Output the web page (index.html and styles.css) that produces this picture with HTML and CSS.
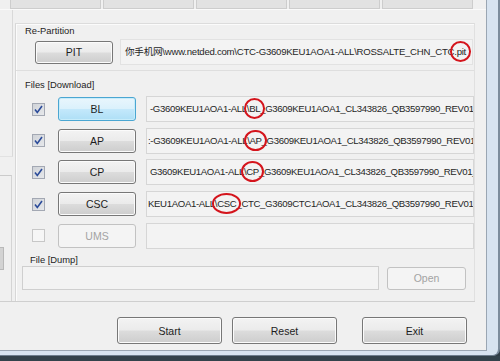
FILE: index.html
```html
<!doctype html>
<html lang="en">
<head>
    <meta charset="UTF-8">
    <title>Odin</title>
    <link rel="stylesheet" href="styles.css">
</head>
<body>
<div class="window">
    <div class="frame">
        <div class="client">
            <div class="tabs">
                <div class="tab"></div>
                <div class="tab"></div>
                <div class="tab"></div>
                <div class="tab"></div>
                <div class="tab"></div>
            </div>
            <div class="body">
                <div class="side">
                    <div class="side-top"></div>
                    <div class="side-bottom"><div class="stub"></div></div>
                </div>
                <div class="main">
                    <div class="part">
                        <div class="caption">Re-Partition</div>
                        <div class="pit-row">
                            <button class="btn pit">PIT</button>
                            <div class="field">你手机网\www.netded.com\CTC-G3609KEU1AOA1-ALL\ROSSALTE_CHN_CT<span class="mark">C.pit</span></div>
                        </div>
                    </div>
                    <div class="files">
                        <div class="caption">Files [Download]</div>
                        <div class="file-row">
                            <span class="check on"><svg viewBox="0 0 11 11"><path d="M2 5.5 L4.3 8.5 L9 2"/></svg></span>
                            <button class="btn focus">BL</button>
                            <div class="field">-G3609KEU1AOA1-AL<span class="mark">L\BL</span>_G3609KEU1AOA1_CL343826_QB3597990_REV01</div>
                        </div>
                        <div class="file-row">
                            <span class="check on"><svg viewBox="0 0 11 11"><path d="M2 5.5 L4.3 8.5 L9 2"/></svg></span>
                            <button class="btn">AP</button>
                            <div class="field cut">:-G3609KEU1AOA1-AL<span class="mark">L\AP</span>_G3609KEU1AOA1_CL343826_QB3597990_REV01</div>
                        </div>
                        <div class="file-row">
                            <span class="check on"><svg viewBox="0 0 11 11"><path d="M2 5.5 L4.3 8.5 L9 2"/></svg></span>
                            <button class="btn">CP</button>
                            <div class="field">G3609KEU1AOA1-AL<span class="mark">L\CP</span>_G3609KEU1AOA1_CL343826_QB3597990_REV01_</div>
                        </div>
                        <div class="file-row">
                            <span class="check on"><svg viewBox="0 0 11 11"><path d="M2 5.5 L4.3 8.5 L9 2"/></svg></span>
                            <button class="btn">CSC</button>
                            <div class="field cut">KEU1AOA1-AL<span class="mark">L\CSC</span>_CTC_G3609CTC1AOA1_CL343826_QB3597990_REV01_</div>
                        </div>
                        <div class="file-row">
                            <span class="check"></span>
                            <button class="btn off">UMS</button>
                            <div class="field"></div>
                        </div>
                    </div>
                    <div class="dump">
                        <div class="caption">File [Dump]</div>
                        <div class="dump-row">
                            <div class="field"></div>
                            <button class="btn off open">Open</button>
                        </div>
                    </div>
                </div>
            </div>
            <div class="actions">
                <button class="btn big">Start</button>
                <button class="btn big">Reset</button>
                <button class="btn big exit">Exit</button>
            </div>
        </div>
    </div>
    <div class="shadow"></div>
</div>
</body>
</html>
```

FILE: styles.css
```css
* {
    padding: 0;
    margin: 0;
    box-sizing: border-box;
}
body {
    width: 500px;
    height: 361px;
    overflow: hidden;
    background: #2f3c45;
    font-family: "Liberation Sans", "Noto Sans CJK SC", sans-serif;
    font-size: 9.6px;
    color: #1e1e1e;
}
.window {
    width: 500px;
    height: 361px;
    display: flex;
    flex-direction: column;
}
.frame {
    height: 356px;
    background: #d7e3f0;
    padding: 0 11px 4px 0;
    border-right: 2px solid #7c8c9c;
    border-bottom: 1px solid #6d7d8d;
    border-bottom-right-radius: 7px;
}
.client {
    width: 487px;
    height: 351px;
    background: #f0f0f0;
    border-right: 1px solid #9aa6b3;
    border-bottom: 1px solid #9aa6b3;
    display: flex;
    flex-direction: column;
}
.shadow {
    flex: 1;
    background: #33424b;
}
.tabs {
    height: 10px;
    display: flex;
    gap: 2px;
    padding-left: 10px;
    border-bottom: 1px solid #fafafa;
}
.tab {
    width: 91px;
    height: 9px;
    background: #e2e2e2;
    border: 1px solid #cdcdcd;
    border-top: none;
}
.body {
    height: 292px;
    display: flex;
    border-bottom: 1px solid #cfcfcf;
    margin-right: 11px;
}
.side {
    width: 15px;
    display: flex;
    flex-direction: column;
}
.side-top {
    height: 147px;
    width: 13px;
    border-right: 1px solid #d9d9d9;
    border-bottom: 1px solid #e2e2e2;
}
.side-bottom {
    margin-top: 18px;
    flex: 1;
    width: 12px;
    border-top: 1px solid #cbcbcb;
    border-right: 1px solid #d4d4d4;
    padding-top: 71px;
}
.stub {
    width: 4px;
    height: 23px;
    background: #d3d3d3;
    border: 1px solid #b9b9b9;
    border-left: none;
}
.main {
    flex: 1;
    min-width: 0;
    margin-top: 13px;
    border-left: 1px solid #d7d7d7;
    border-top: 1px solid #dcdcdc;
    border-right: 1px solid #e0e0e0;
    box-shadow: inset 1px 1px 0 #fbfbfb;
    display: flex;
    flex-direction: column;
}
.caption {
    line-height: 12px;
    padding-left: 9px;
    font-size: 9.4px;
}
.part {
    padding-top: 1px;
    height: 47px;
    border-bottom: 1px solid #dedede;
}
.pit-row {
    display: flex;
    align-items: center;
    margin-top: 2px;
    height: 26px;
}
.btn {
    font-family: inherit;
    font-size: 10.5px;
    color: #1e1e1e;
    width: 78px;
    height: 24px;
    border: 1px solid #777;
    border-radius: 3px;
    background: linear-gradient(#f3f3f3, #ebebeb 48%, #dcdcdc 52%, #cdcdcd);
    box-shadow: inset 0 0 0 1px #fbfbfb;
    flex-shrink: 0;
}
.btn.pit {
    margin-left: 19px;
    height: 23px;
}
.btn.focus {
    border-color: #4aa6d2;
    background: linear-gradient(#e9f6fd, #dbf1fc 48%, #c3e8fb 52%, #aedff6);
    box-shadow: inset 0 0 0 1px #c7ecfa;
}
.btn.off {
    color: #a3a3a3;
    border-color: #c2c2c2;
    background: #f4f4f4;
    box-shadow: none;
}
.field {
    flex: 1;
    min-width: 0;
    height: 26px;
    line-height: 24px;
    background: #f3f3f3;
    border: 1px solid #d6d6d6;
    padding-left: 3px;
    white-space: nowrap;
    overflow: hidden;
    letter-spacing: -0.25px;
    color: #262626;
}
.pit-row .field {
    margin-left: 7px;
    margin-right: 1px;
    border-color: #e2e2e2;
    padding-left: 4px;
}
.mark {
    position: relative;
}
.mark::after {
    content: "";
    position: absolute;
    left: 2px;
    right: -5px;
    top: -5px;
    bottom: -5px;
    border: 2.5px solid #d4141c;
    border-radius: 50%;
}
.files {
    padding-top: 8px;
}
.files .caption {
    margin-bottom: 5px;
}
.file-row {
    display: flex;
    align-items: center;
    height: 26px;
    margin-bottom: 5.7px;
    padding-left: 16px;
}
.check {
    width: 13px;
    height: 13px;
    border: 1px solid #a3a8b3;
    background: linear-gradient(135deg, #d0d3d8, #e6e8eb);
    margin-right: 13px;
    display: flex;
    flex-shrink: 0;
}
.check svg {
    width: 11px;
    height: 11px;
    fill: none;
    stroke: #2b4b9a;
    stroke-width: 1.6;
}
.check:not(.on) {
    border-color: #c7c7c7;
    background: #f6f6f6;
}
.file-row .field {
    margin-left: 10px;
    letter-spacing: -0.34px;
}
.file-row .field.cut {
    text-indent: -2px;
}
.dump {
    padding-left: 6px;
}
.dump .caption {
    padding-left: 8px;
}
.dump-row {
    display: flex;
    align-items: center;
    height: 24px;
}
.dump-row .field {
    height: 24px;
    border-color: #cfcfcf;
}
.btn.open {
    height: 23px;
    width: 79px;
    margin: 0 8px;
}
.actions {
    display: flex;
    justify-content: flex-end;
    padding: 15px 19px 0 0;
    gap: 10px;
}
.btn.big {
    width: 105px;
    height: 27px;
}
.btn.exit {
    margin-left: 15px;
}
```
